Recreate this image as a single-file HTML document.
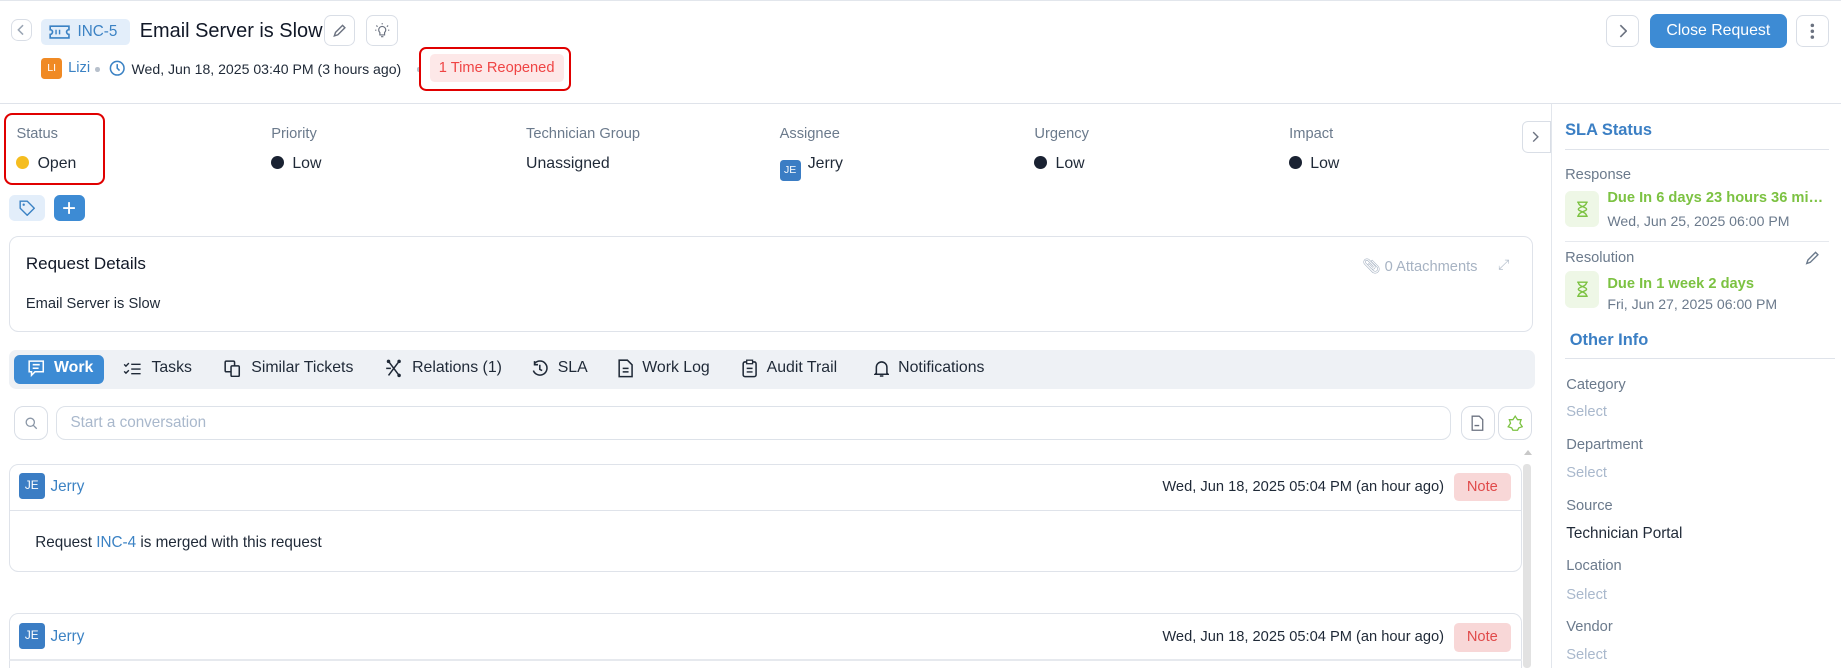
<!DOCTYPE html>
<html><head><meta charset="utf-8"><style>
html,body{margin:0;padding:0;background:#fff;overflow:hidden}
body{width:1841px;height:668px}
#r{position:relative;width:1568px;height:569px;zoom:1.17411;font-family:"Liberation Sans",sans-serif;color:#1f2937;overflow:hidden}
.a{position:absolute;white-space:nowrap}
.btn{position:absolute;border:1px solid #d9dee6;border-radius:6px;background:#fff;box-sizing:border-box;display:flex;align-items:center;justify-content:center}
.lbl{font-size:12.5px;color:#6b7a8c}
.val{font-size:13.5px;color:#1f2937}
.dot{display:inline-block;width:11px;height:11px;border-radius:50%;background:#1a2232;vertical-align:-1px;margin-right:7px}
.tab{position:absolute;top:306px;height:16px;font-size:13.5px;line-height:16px;color:#1f2937;display:flex;align-items:center;gap:8px}
.sel{font-size:12.5px;color:#a9b8cc}
</style></head><body><div id="r">
<div class="a" style="left:0;top:0;width:1568px;height:1px;background:#e2e6ec"></div>
<div class="btn" style="left:9px;top:16px;width:18px;height:19px"><svg width="8" height="10" viewBox="0 0 8 10"><path d="M6 1L2 5l4 4" stroke="#9aa5b4" stroke-width="1.3" fill="none"/></svg></div>
<div class="a" style="left:35px;top:16px;width:76px;height:22px;background:#e3eefa;border-radius:4px"></div>
<svg class="a" style="left:42px;top:21px" width="18" height="12" viewBox="0 0 18 12"><path d="M1 1h16v3a2 2 0 000 4v3H1V8a2 2 0 000-4z" fill="none" stroke="#3b82c4" stroke-width="1.4"/><path d="M6 4v4M9 4v4" stroke="#3b82c4" stroke-width="1.2"/></svg>
<div class="a" style="left:66px;top:20px;font-size:13px;color:#3b82c4">INC-5</div>
<div class="a" style="left:119px;top:17px;font-size:17px;color:#111827">Email Server is Slow</div>
<div class="btn" style="left:276px;top:13px;width:26px;height:26px"><svg width="13" height="13" viewBox="0 0 13 13"><path d="M2 11l1-3 6-6 2 2-6 6z" fill="none" stroke="#6b7280" stroke-width="1.2"/></svg></div>
<div class="btn" style="left:312px;top:13px;width:27px;height:26px"><svg width="14" height="14" viewBox="0 0 14 14"><path d="M5 9a3 3 0 114 0v2H5z M6 12.5h2 M7 1v1 M2 3l1 1 M12 3l-1 1 M1 7h1 M12 7h1" fill="none" stroke="#6b7280" stroke-width="1"/></svg></div>
<div class="a" style="left:35px;top:49px;width:18px;height:18px;background:#f08a24;border-radius:3px;color:#fff;font-size:9px;text-align:center;line-height:18px">LI</div>
<div class="a" style="left:58px;top:51px;font-size:12.5px;color:#3b82c4">Lizi</div>
<div class="a" style="left:81px;top:57px;width:4px;height:4px;border-radius:50%;background:#b7c0cc"></div>
<svg class="a" style="left:93px;top:51px" width="14" height="14" viewBox="0 0 14 14"><circle cx="7" cy="7" r="5.8" fill="none" stroke="#3b82c4" stroke-width="1.3"/><path d="M7 3.5V7l2 2" fill="none" stroke="#3b82c4" stroke-width="1.3"/></svg>
<div class="a" style="left:112px;top:52px;font-size:12px;color:#1f2937">Wed, Jun 18, 2025 03:40 PM (3 hours ago)</div>
<div class="a" style="left:355px;top:57px;width:4px;height:4px;border-radius:50%;background:#b7c0cc"></div>
<div class="a" style="left:366px;top:46px;width:114px;height:24px;background:#fde8e8;border-radius:4px;color:#ef4444;font-size:12.5px;text-align:center;line-height:24px">1 Time Reopened</div>
<div class="a" style="left:357px;top:40px;width:126px;height:34px;border:2px solid #e00000;border-radius:6px"></div>
<div class="btn" style="left:1368px;top:13px;width:28px;height:27px"><svg width="8" height="12" viewBox="0 0 8 12"><path d="M2 1l5 5-5 5" stroke="#6b7280" stroke-width="1.4" fill="none"/></svg></div>
<div class="a" style="left:1405px;top:12px;width:117px;height:29px;background:#3d8bd4;border-radius:6px;color:#fff;font-size:13.5px;text-align:center;line-height:29px">Close Request</div>
<div class="btn" style="left:1530px;top:13px;width:28px;height:27px"><svg width="4" height="14" viewBox="0 0 4 14"><circle cx="2" cy="2" r="1.5" fill="#6b7280"/><circle cx="2" cy="7" r="1.5" fill="#6b7280"/><circle cx="2" cy="12" r="1.5" fill="#6b7280"/></svg></div>
<div class="a" style="left:0;top:88px;width:1568px;height:1px;background:#dfe3ea"></div>
<div class="a" style="left:1321px;top:89px;width:1px;height:480px;background:#e2e6ec"></div>

<div class="a lbl" style="left:14px;top:107px">Status</div><div class="a val" style="left:14px;top:132px"><span class="dot" style="background:#f5bd1f"></span>Open</div>
<div class="a" style="left:3px;top:96px;width:83px;height:58px;border:2px solid #e00000;border-radius:7px"></div>
<div class="a lbl" style="left:231px;top:107px">Priority</div><div class="a val" style="left:231px;top:132px"><span class="dot"></span>Low</div>
<div class="a lbl" style="left:448px;top:107px">Technician Group</div><div class="a val" style="left:448px;top:132px">Unassigned</div>
<div class="a lbl" style="left:664px;top:107px">Assignee</div><div class="a val" style="left:664px;top:132px"><span style="display:inline-block;width:18px;height:18px;background:#3b7dc4;border-radius:3px;color:#fff;font-size:9px;text-align:center;line-height:18px;vertical-align:-4px;margin-right:6px">JE</span>Jerry</div>
<div class="a lbl" style="left:881px;top:107px">Urgency</div><div class="a val" style="left:881px;top:132px"><span class="dot"></span>Low</div>
<div class="a lbl" style="left:1098px;top:107px">Impact</div><div class="a val" style="left:1098px;top:132px"><span class="dot"></span>Low</div>
<div class="btn" style="left:1296px;top:103px;width:25px;height:27px;border-radius:5px 0 0 5px"><svg width="7" height="10" viewBox="0 0 7 10"><path d="M1 1l4 4-4 4" stroke="#6b7280" stroke-width="1.2" fill="none"/></svg></div>

<div class="a" style="left:8px;top:166px;width:30px;height:22px;background:#e3eefa;border-radius:5px"><svg style="margin:4px 8px" width="14" height="14" viewBox="0 0 14 14"><path d="M1 1h6l6 6-6 6-6-6z" fill="none" stroke="#3b82c4" stroke-width="1.2"/><circle cx="4" cy="4" r="1" fill="#3b82c4"/></svg></div>
<div class="a" style="left:46px;top:166px;width:26px;height:22px;background:#3d8bd4;border-radius:5px"><svg style="margin:5px 7px" width="12" height="12" viewBox="0 0 12 12"><path d="M6 1v10M1 6h10" stroke="#fff" stroke-width="1.6"/></svg></div>

<div class="a" style="left:8px;top:201px;width:1298px;height:82px;border:1px solid #dfe3ea;border-radius:8px;box-sizing:border-box"></div>
<div class="a" style="left:22px;top:216px;font-size:14.5px;color:#111827">Request Details</div>
<div class="a" style="left:22px;top:252px;font-size:12.5px">Email Server is Slow</div>
<div class="a" style="left:1160px;top:219px;font-size:12.5px;color:#a7b3c3">&#128206;&#xFE0E; 0 Attachments</div>
<div class="a" style="left:1276px;top:218px;font-size:12px;color:#b5bfcc">⤢</div>

<div class="a" style="left:8px;top:298px;width:1299px;height:33px;background:#eef1f5;border-radius:6px"></div>
<div class="a" style="left:12px;top:302px;width:77px;height:25px;background:#3d8bd4;border-radius:5px"></div>
<div class="tab" style="left:24px;color:#fff;font-weight:bold"><svg width="14" height="14" viewBox="0 0 14 14"><path d="M1 1h12v9H6l-3 3v-3H1z M4 4h6M4 7h5" fill="none" stroke="#fff" stroke-width="1.3"/></svg>Work</div>
<div class="tab" style="left:105px"><svg width="16" height="12" viewBox="0 0 16 12"><path d="M1 2l1.5 1.5L5 1M1 8l1.5 1.5L5 7M7 2h8M7 6h8M7 10h8" fill="none" stroke="#1f2937" stroke-width="1.2"/></svg>Tasks</div>
<div class="tab" style="left:191px"><svg width="15" height="15" viewBox="0 0 15 15"><rect x="1" y="1" width="8" height="9" rx="1" fill="none" stroke="#1f2937" stroke-width="1.3"/><rect x="6" y="5" width="7" height="9" rx="1" fill="#eef1f5" stroke="#1f2937" stroke-width="1.3"/></svg>Similar Tickets</div>
<div class="tab" style="left:328px"><svg width="15" height="16" viewBox="0 0 15 16"><path d="M3 2l9 12M12 2L3 14M1 8h4" stroke="#1f2937" stroke-width="1.3" fill="none"/><circle cx="3" cy="2" r="1.5" fill="#1f2937"/><circle cx="12" cy="2" r="1.5" fill="#1f2937"/><circle cx="12" cy="14" r="1.5" fill="#1f2937"/></svg>Relations (1)</div>
<div class="tab" style="left:452px"><svg width="15" height="15" viewBox="0 0 15 15"><path d="M3 3a6 6 0 11-1 6M3 1v3h3M7.5 4v4l2 1" fill="none" stroke="#1f2937" stroke-width="1.3"/></svg>SLA</div>
<div class="tab" style="left:526px"><svg width="13" height="16" viewBox="0 0 13 16"><path d="M1 1h7l4 4v10H1z M4 8h5M4 11h5" fill="none" stroke="#1f2937" stroke-width="1.3"/></svg>Work Log</div>
<div class="tab" style="left:632px"><svg width="13" height="16" viewBox="0 0 13 16"><rect x="1" y="2.5" width="11" height="12.5" rx="1.5" fill="none" stroke="#1f2937" stroke-width="1.3"/><rect x="4" y="1" width="5" height="3" fill="#fff" stroke="#1f2937" stroke-width="1.1"/><path d="M4 8h5M4 11h5" stroke="#1f2937" stroke-width="1.2"/></svg>Audit Trail</div>
<div class="tab" style="left:744px"><svg width="13" height="16" viewBox="0 0 13 16"><path d="M2 12V7a4.5 4.5 0 019 0v5l1 1H1z M5 14.5h3" fill="none" stroke="#1f2937" stroke-width="1.3"/></svg>Notifications</div>

<div class="btn" style="left:12px;top:346px;width:29px;height:29px;border-radius:8px"><svg width="11" height="11" viewBox="0 0 11 11"><circle cx="4.5" cy="4.5" r="3.5" fill="none" stroke="#8a96a6" stroke-width="1.1"/><path d="M7 7l3 3" stroke="#8a96a6" stroke-width="1.1"/></svg></div>
<div class="a" style="left:48px;top:346px;width:1188px;height:29px;border:1px solid #dde2e9;border-radius:8px;box-sizing:border-box"></div>
<div class="a" style="left:60px;top:353px;font-size:13px;color:#a9b8cc">Start a conversation</div>
<div class="btn" style="left:1244px;top:346px;width:29px;height:29px;border-radius:8px"><svg width="11" height="14" viewBox="0 0 11 14"><path d="M1 1h6l3 3v9H1z M3 9h4" fill="none" stroke="#6b7280" stroke-width="1.1"/></svg></div>
<div class="btn" style="left:1276px;top:346px;width:29px;height:29px;border-radius:8px"><svg width="14" height="14" viewBox="0 0 14 14"><path d="M7 1l2 3h3l-1 3 2 3-3 1-1 2H5l-1-2-3-1 2-3-1-3h3z" fill="none" stroke="#7cc242" stroke-width="1.1"/></svg></div>

<div class="a" style="left:1298px;top:383px;width:0;height:0;border:4px solid transparent;border-bottom:5px solid #c8c8c8;border-top:0"></div>
<div class="a" style="left:1297px;top:395px;width:7px;height:174px;background:#e2e2e2;border-radius:3px"></div>

<div class="a" style="left:8px;top:395px;width:1288px;height:92px;border:1px solid #dfe3ea;border-radius:8px;box-sizing:border-box"></div>
<div class="a" style="left:8px;top:434px;width:1288px;height:1px;background:#dfe3ea"></div>
<div class="a" style="left:16px;top:403px;width:22px;height:22px;background:#3b7dc4;border-radius:3px;color:#fff;font-size:10px;text-align:center;line-height:22px">JE</div>
<div class="a" style="left:43px;top:407px;font-size:13px;color:#3b82c4">Jerry</div>
<div class="a" style="left:990px;top:408px;font-size:12.5px">Wed, Jun 18, 2025 05:04 PM (an hour ago)</div>
<div class="a" style="left:1238px;top:403px;width:49px;height:24px;background:#f8d7d7;border-radius:4px;color:#e04a4a;font-size:12.5px;text-align:center;line-height:24px">Note</div>
<div class="a" style="left:30px;top:455px;font-size:13px">Request <span style="color:#3b82c4">INC-4</span> is merged with this request</div>

<div class="a" style="left:8px;top:522px;width:1288px;height:60px;border:1px solid #dfe3ea;border-radius:8px;box-sizing:border-box"></div>
<div class="a" style="left:8px;top:561px;width:1288px;height:2px;background:#e6e9ee"></div>
<div class="a" style="left:16px;top:531px;width:22px;height:22px;background:#3b7dc4;border-radius:3px;color:#fff;font-size:10px;text-align:center;line-height:22px">JE</div>
<div class="a" style="left:43px;top:535px;font-size:13px;color:#3b82c4">Jerry</div>
<div class="a" style="left:990px;top:536px;font-size:12.5px">Wed, Jun 18, 2025 05:04 PM (an hour ago)</div>
<div class="a" style="left:1238px;top:531px;width:49px;height:24px;background:#f8d7d7;border-radius:4px;color:#e04a4a;font-size:12.5px;text-align:center;line-height:24px">Note</div>

<div class="a" style="left:1333px;top:103px;font-size:14px;font-weight:bold;color:#3b7fc4">SLA Status</div>
<div class="a" style="left:1333px;top:127px;width:225px;height:1px;background:#dfe3ea"></div>
<div class="a lbl" style="left:1333px;top:142px">Response</div>
<div class="a" style="left:1333px;top:163px;width:29px;height:30px;background:#eef7e6;border-radius:5px"><svg style="margin:8px 9px" width="11" height="14" viewBox="0 0 11 14"><path d="M1 1h9M1 13h9M2 1c0 4 7 4 7 6s-7 2-7 6M9 1c0 4-7 4-7 6s7 2 7 6" fill="none" stroke="#7cc242" stroke-width="1.2"/></svg></div>
<div class="a" style="left:1369px;top:162px;font-size:12.5px;font-weight:bold;color:#7cc242;width:188px;overflow:hidden;text-overflow:ellipsis">Due In 6 days 23 hours 36 minutes</div>
<div class="a" style="left:1369px;top:181px;font-size:12px;color:#6b7a8c">Wed, Jun 25, 2025 06:00 PM</div>
<div class="a" style="left:1333px;top:205px;width:225px;height:1px;background:#e6e9ee"></div>
<div class="a lbl" style="left:1333px;top:213px">Resolution</div>
<svg class="a" style="left:1537px;top:213px" width="13" height="13" viewBox="0 0 13 13"><path d="M1.5 11.5l1-3 6.5-6.5 2 2-6.5 6.5z" fill="none" stroke="#6b7a8c" stroke-width="1.2"/></svg>
<div class="a" style="left:1333px;top:231px;width:29px;height:31px;background:#eef7e6;border-radius:5px"><svg style="margin:8px 9px" width="11" height="14" viewBox="0 0 11 14"><path d="M1 1h9M1 13h9M2 1c0 4 7 4 7 6s-7 2-7 6M9 1c0 4-7 4-7 6s7 2 7 6" fill="none" stroke="#7cc242" stroke-width="1.2"/></svg></div>
<div class="a" style="left:1369px;top:235px;font-size:12.5px;font-weight:bold;color:#7cc242">Due In 1 week 2 days</div>
<div class="a" style="left:1369px;top:252px;font-size:12px;color:#6b7a8c">Fri, Jun 27, 2025 06:00 PM</div>
<div class="a" style="left:1337px;top:282px;font-size:14px;font-weight:bold;color:#3b7fc4">Other Info</div>
<div class="a" style="left:1333px;top:305px;width:230px;height:1px;background:#dfe3ea"></div>
<div class="a lbl" style="left:1334px;top:321px">Category</div><div class="a sel" style="left:1334px;top:344px">Select</div>
<div class="a lbl" style="left:1334px;top:372px">Department</div><div class="a sel" style="left:1334px;top:396px">Select</div>
<div class="a lbl" style="left:1334px;top:424px">Source</div><div class="a val" style="left:1334px;top:447px;font-size:13px">Technician Portal</div>
<div class="a lbl" style="left:1334px;top:475px">Location</div><div class="a sel" style="left:1334px;top:500px">Select</div>
<div class="a lbl" style="left:1334px;top:527px">Vendor</div><div class="a sel" style="left:1334px;top:551px">Select</div>
</div></body></html>
